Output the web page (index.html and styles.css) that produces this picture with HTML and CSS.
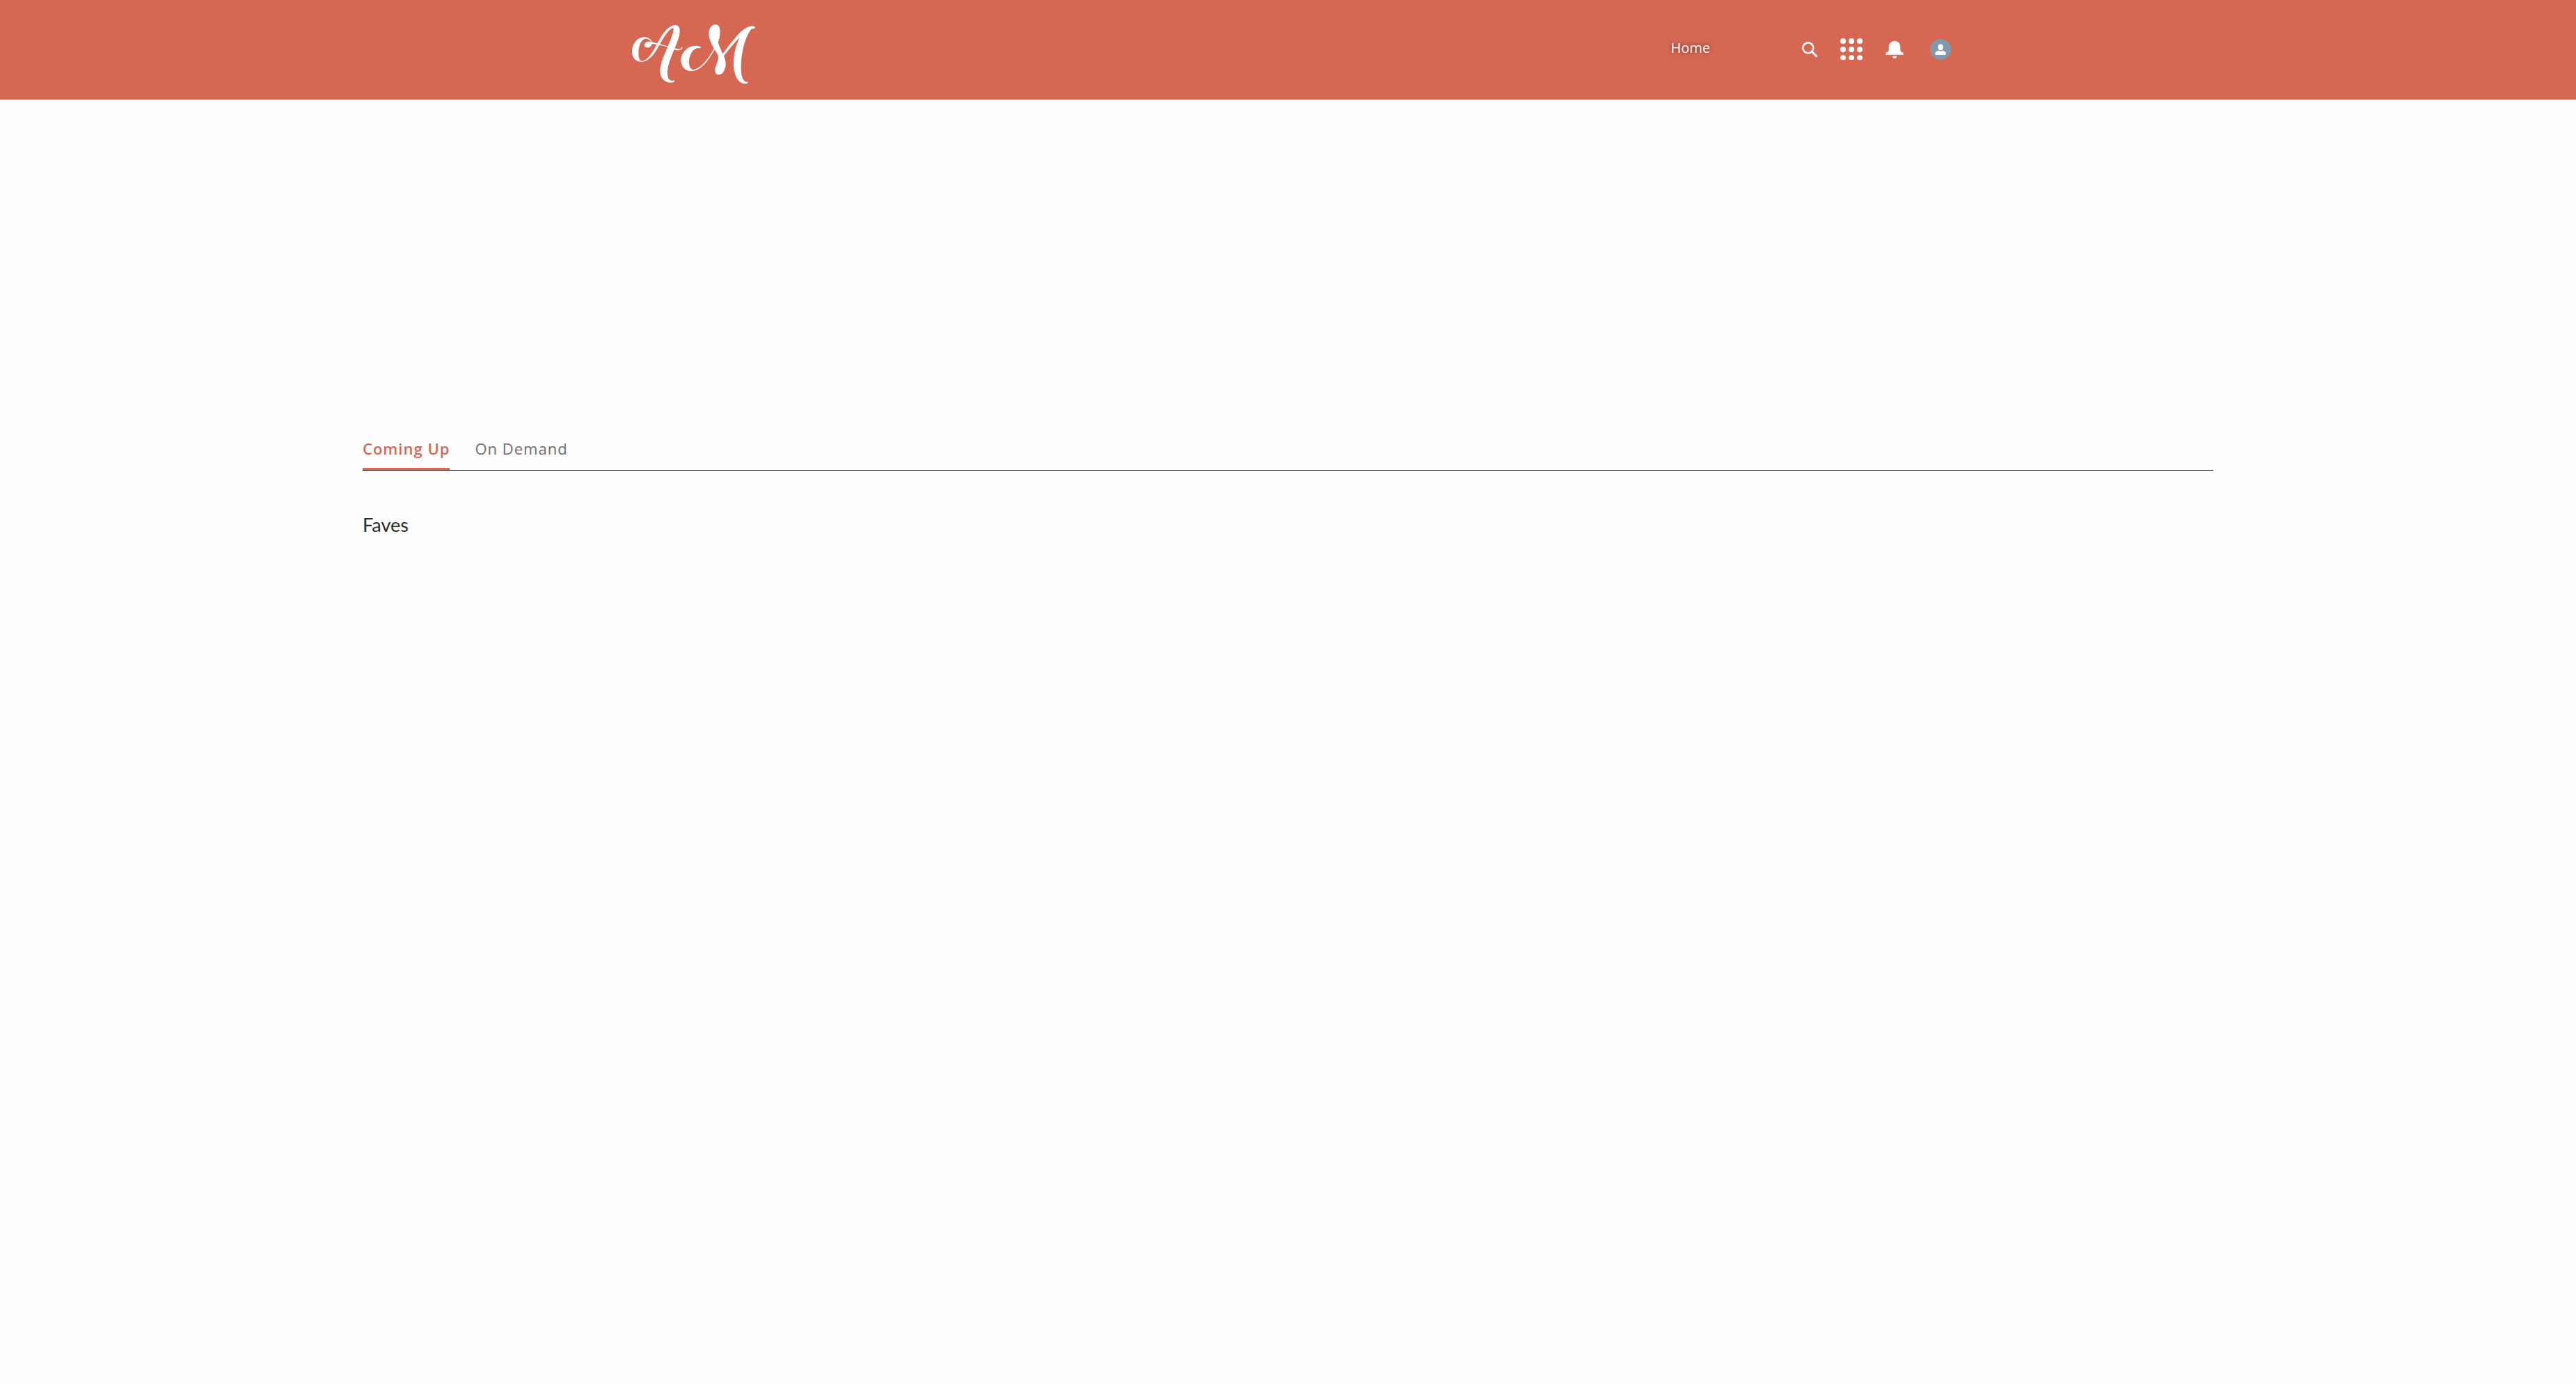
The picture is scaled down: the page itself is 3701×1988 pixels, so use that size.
FILE: index.html
```html
<!DOCTYPE html>
<html lang="en">
<head>
<meta charset="utf-8">
<meta name="viewport" content="width=device-width, initial-scale=1">
<title>Home</title>
<link rel="stylesheet" href="styles.css">
</head>
<body>
<header class="site-header">
  <div class="header-inner">
    <a class="logo" href="#" aria-label="AM home">
      <svg width="178" height="86" viewBox="53 44 534 258" aria-hidden="true">
        <g fill="#fff">
          <path d="M139 120C133 103 114 96 96 100C70 105 53 132 53 160C53 188 70 206 97 205C126 203 147 174 164 146C185 110 205 69 229 60C234 59 232 68 230 77C220 124 174 197 174 246C174 275 193 294 218 295C229 295 237 292 237 287C234 284 229 288 223 286C211 284 206 272 206 253C206 201 249 134 258 85C262 62 256 47 240 47C214 47 190 78 176 101C158 130 131 197 99 201C86 202 81 191 81 169C81 137 91 109 111 106C121 105 132 112 135 120Z"/>
          <path d="M124 118C114 118 106 125 106 133C106 140 112 144 120 144C131 144 138 136 139 127C160 131 188 136 211 142C226 146 235 155 252 156C263 156 270 151 270 144C268 140 262 145 265 149C255 154 242 147 228 144C199 138 160 123 135 120Z"/>
          <path d="M349 142C336 133 307 135 291 148C273 162 263 181 264 201C266 228 282 245 308 245C353 245 386 194 409 153C415 163 424 173 425 184C426 203 411 224 411 241C411 254 417 261 427 261C441 261 449 249 454 234C460 215 456 197 449 180C472 150 499 118 517 101C501 132 491 172 491 212C491 265 511 299 541 300C550 300 554 296 553 291C549 291 546 293 542 291C529 285 523 261 523 231C523 169 537 111 562 71C569 60 578 65 584 59C583 51 574 51 564 52C534 57 507 91 488 114C472 134 457 153 444 171C437 153 428 137 424 121C430 106 434 86 432 68C431 52 424 45 413 45C396 45 384 62 384 85C384 107 397 129 406 148C385 188 353 233 316 240C302 236 298 218 299 201C301 171 318 148 337 146C341 146 345 149 349 146Z"/>
        </g>
      </svg>
    </a>
    <nav class="main-nav" aria-label="Main"><a href="#">Home</a></nav>
    <div class="tools">
      <button class="tool" type="button" aria-label="Search">
        <svg width="22" height="22" viewBox="0 0 22 22" fill="none" stroke="#fff"><circle cx="8.8" cy="8.8" r="7.5" stroke-width="2.5"/><path d="M14.2 14.2L20.8 20.8" stroke-width="2.8" stroke-linecap="round"/></svg>
      </button>
      <button class="tool" type="button" aria-label="App launcher">
        <svg width="32" height="32" viewBox="0 0 32 32" fill="#fff"><circle cx="4" cy="4" r="4"/><circle cx="16" cy="4" r="4"/><circle cx="28" cy="4" r="4"/><circle cx="4" cy="16" r="4"/><circle cx="16" cy="16" r="4"/><circle cx="28" cy="16" r="4"/><path d="M1.400 31a4 4 0 1 1 5.200 0zM13.400 31a4 4 0 1 1 5.200 0zM25.400 31a4 4 0 1 1 5.200 0z"/></svg>
      </button>
      <button class="tool" type="button" aria-label="Notifications">
        <svg width="26" height="26" viewBox="0 0 26 26" fill="#fff"><path d="M13 0.800C8.500 0.800 4.700 4.400 4.700 9V13.500C4.700 15.500 3.800 16.800 1.800 17.200C.8 17.400.3 18 .3 19V20.800H25.700V19C25.700 18 25.200 17.400 24.200 17.200C22.200 16.800 21.300 15.500 21.300 13.500V9C21.300 4.400 17.500.8 13 .8ZM9.800 22.800H16.200C16.200 24.500 14.800 25.800 13 25.800S9.800 24.500 9.800 22.800Z"/></svg>
      </button>
      <button class="tool tool-profile" type="button" aria-label="User profile">
        <svg width="30" height="30" viewBox="0 0 30 30"><circle cx="15" cy="15" r="15" fill="#8199af"/><path fill="#fff" d="M15 7.200C12.800 7.200 11.200 9 11.200 11.500C11.200 13.200 11.900 14.900 13.100 15.700C15 16.700 15 16.700 16.900 15.700C18.100 14.900 18.800 13.200 18.800 11.500C18.800 9 17.200 7.200 15 7.200ZM12 16.500C9.500 17.500 7.300 18.500 7.300 20.500V21.500C7.300 22.300 7.900 22.900 8.700 22.900H21.300C22.100 22.900 22.700 22.300 22.700 21.500V20.500C22.700 18.500 20.500 17.500 18 16.500C16.500 18 13.500 18 12 16.500Z"/></svg>
      </button>
    </div>
  </div>
</header>
<main class="content">
  <div class="tabs" role="tablist">
    <button class="tab tab-active" type="button" role="tab" aria-selected="true">Coming Up</button>
    <button class="tab" type="button" role="tab" aria-selected="false">On Demand</button>
  </div>
  <h2 class="section-title">Faves</h2>
</main>
</body>
</html>
```
FILE: styles.css
```css
* {
  box-sizing: border-box;
}

body {
  margin: 0;
  background: #fefefe;
  color: #2b2b2b;
  font-family: "Open Sans", sans-serif;
}

.site-header {
  background: #d66853;
}

.header-inner {
  display: flex;
  align-items: center;
  max-width: 1905px;
  margin: 0 auto;
  padding: 35px 0 22px 10px;
}

.logo {
  display: flex;
}

.logo svg,
.tool svg {
  display: block;
}

.main-nav {
  margin: 0 132px 18px auto;
  font-size: 20px;
  line-height: 24px;
}

.main-nav a {
  color: #fff;
  text-decoration: none;
  text-shadow: 0 0 6px rgba(0, 0, 0, 0.6);
}

.tools {
  display: flex;
  align-items: center;
  gap: 33px;
  margin-bottom: 14px;
}

.tool {
  padding: 0;
  border: 0;
  background: none;
  cursor: pointer;
}

.tool-profile {
  margin-left: 5px;
}

.content {
  max-width: 2659px;
  margin: 0 auto;
  padding: 475px 0 80px;
}

.tabs {
  display: flex;
  gap: 36px;
  border-bottom: 1px solid #221c20;
}

.tab {
  padding: 13px 0 15px;
  border: 0;
  border-bottom: 3px solid transparent;
  background: none;
  color: #6b6d70;
  font-family: inherit;
  font-size: 22px;
  line-height: 26px;
  letter-spacing: 1px;
  cursor: pointer;
}

.tab-active {
  border-bottom-color: #d66853;
  color: #d66853;
  font-weight: 600;
}

.section-title {
  margin: 60px 0 0;
  font-family: Lato, sans-serif;
  font-size: 27px;
  font-weight: 400;
  line-height: 36px;
}
```
